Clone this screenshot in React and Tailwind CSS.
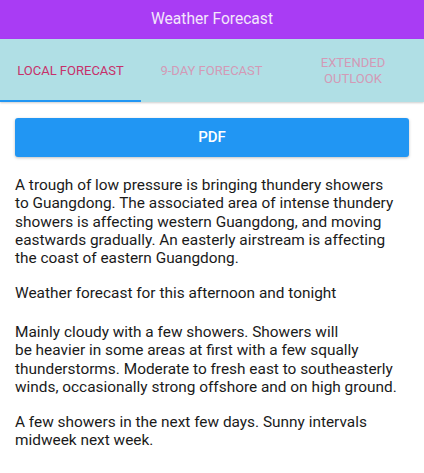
export default function App() {
  return (
    <div className="w-[424px] h-[473px] bg-white overflow-hidden" style={{ fontFamily: "Roboto, 'Liberation Sans', sans-serif" }}>
      <div className="h-[39px] bg-[#a93cf4] flex items-center justify-center text-[#f3e6fb] text-[15.6px]">
        Weather Forecast
      </div>
      <div className="relative h-[63px] bg-[#b0dfe5] flex shadow-[0_1px_2px_rgba(0,0,0,0.2)]">
        <div className="w-[141px] flex items-center justify-center text-[13px] text-[#c7306a] relative">
          LOCAL FORECAST
          <div className="absolute left-0 right-0 bottom-0 h-[2px] bg-[#2196f3]" />
        </div>
        <div className="w-[141px] flex items-center justify-center text-[13px] text-[#d39ab6]">
          9-DAY FORECAST
        </div>
        <div className="w-[142px] flex items-center justify-center text-[13px] text-[#d39ab6] text-center leading-[16px] px-6">
          EXTENDED OUTLOOK
        </div>
      </div>
      <div className="px-[15px] pt-[16px]">
        <div className="h-[39px] bg-[#2196f3] rounded-[3px] shadow-[0_1px_3px_rgba(0,0,0,0.25)] flex items-center justify-center text-white text-[15px] font-medium">
          PDF
        </div>
        <div className="mt-[19px] w-[384px] text-[15.4px] leading-[18.33px] text-[#1a1a1a]">
          <p>
            A trough of low pressure is bringing thundery showers to Guangdong. The associated area of intense thundery showers is affecting western Guangdong, and moving eastwards gradually. An easterly airstream is affecting the coast of eastern Guangdong.
          </p>
          <p className="mt-[16px]">Weather forecast for this afternoon and tonight</p>
          <p className="mt-[21px]">
            Mainly cloudy with a few showers. Showers will
            <br />
            be heavier in some areas at first with a few squally thunderstorms. Moderate to fresh east to southeasterly winds, occasionally strong offshore and on high ground.
          </p>
          <p className="mt-[16.7px]">
            A few showers in the next few days. Sunny intervals midweek next week.
          </p>
        </div>
      </div>
    </div>
  );
}
